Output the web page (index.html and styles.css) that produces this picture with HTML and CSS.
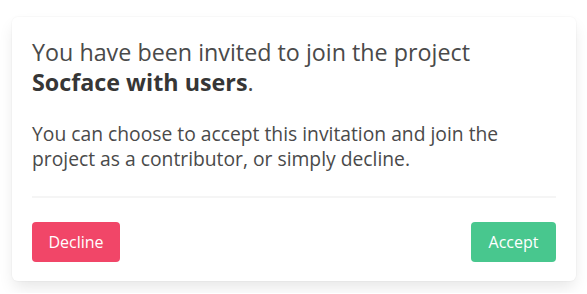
FILE: index.html
```html
<!DOCTYPE html>
<html>
<head>
    <meta charset="utf-8">
    <title>Project invitation</title>
    <link rel="stylesheet" href="styles.css">
</head>
<body>
    <div class="box invite">
        <p class="invite-title">You have been invited to join the project<br><strong>Socface with users</strong>.</p>
        <p class="invite-text">You can choose to accept this invitation and join the<br>project as a contributor, or simply decline.</p>
        <hr>
        <div class="invite-actions">
            <button class="button is-danger">Decline</button>
            <button class="button is-success">Accept</button>
        </div>
    </div>
</body>
</html>
```

FILE: styles.css
```css
html, body {
    margin: 0;
    background: #fff;
}

body {
    padding: 17px 11px 12px 12px;
    font-family: "Open Sans", "Noto Sans", sans-serif;
    color: #4a4a4a;
}

.box {
    background: #fff;
    border-radius: 6px;
    box-shadow: 0 0.5em 1em -0.125em rgba(10, 10, 10, 0.1), 0 0 0 1px rgba(10, 10, 10, 0.02);
    padding: 20px 20px 19px;
}

.invite-title {
    margin: 0 0 24px;
    font-size: 23.3px;
    line-height: 30px;
}

.invite-title strong {
    color: #363636;
    font-weight: 700;
}

.invite-text {
    margin: 0;
    font-size: 19.3px;
    line-height: 25px;
}

hr {
    border: none;
    height: 2px;
    background: #f5f5f5;
    margin: 25px 0 24px;
}

.invite-actions {
    display: flex;
    justify-content: space-between;
}

.button {
    height: 40px;
    padding: 0 16px;
    border: none;
    border-radius: 4px;
    font-family: inherit;
    font-size: 16px;
    color: #fff;
    cursor: pointer;
}

.button.is-danger {
    background: #f14668;
    width: 88px;
}

.button.is-success {
    background: #48c78e;
    width: 85px;
}
```
